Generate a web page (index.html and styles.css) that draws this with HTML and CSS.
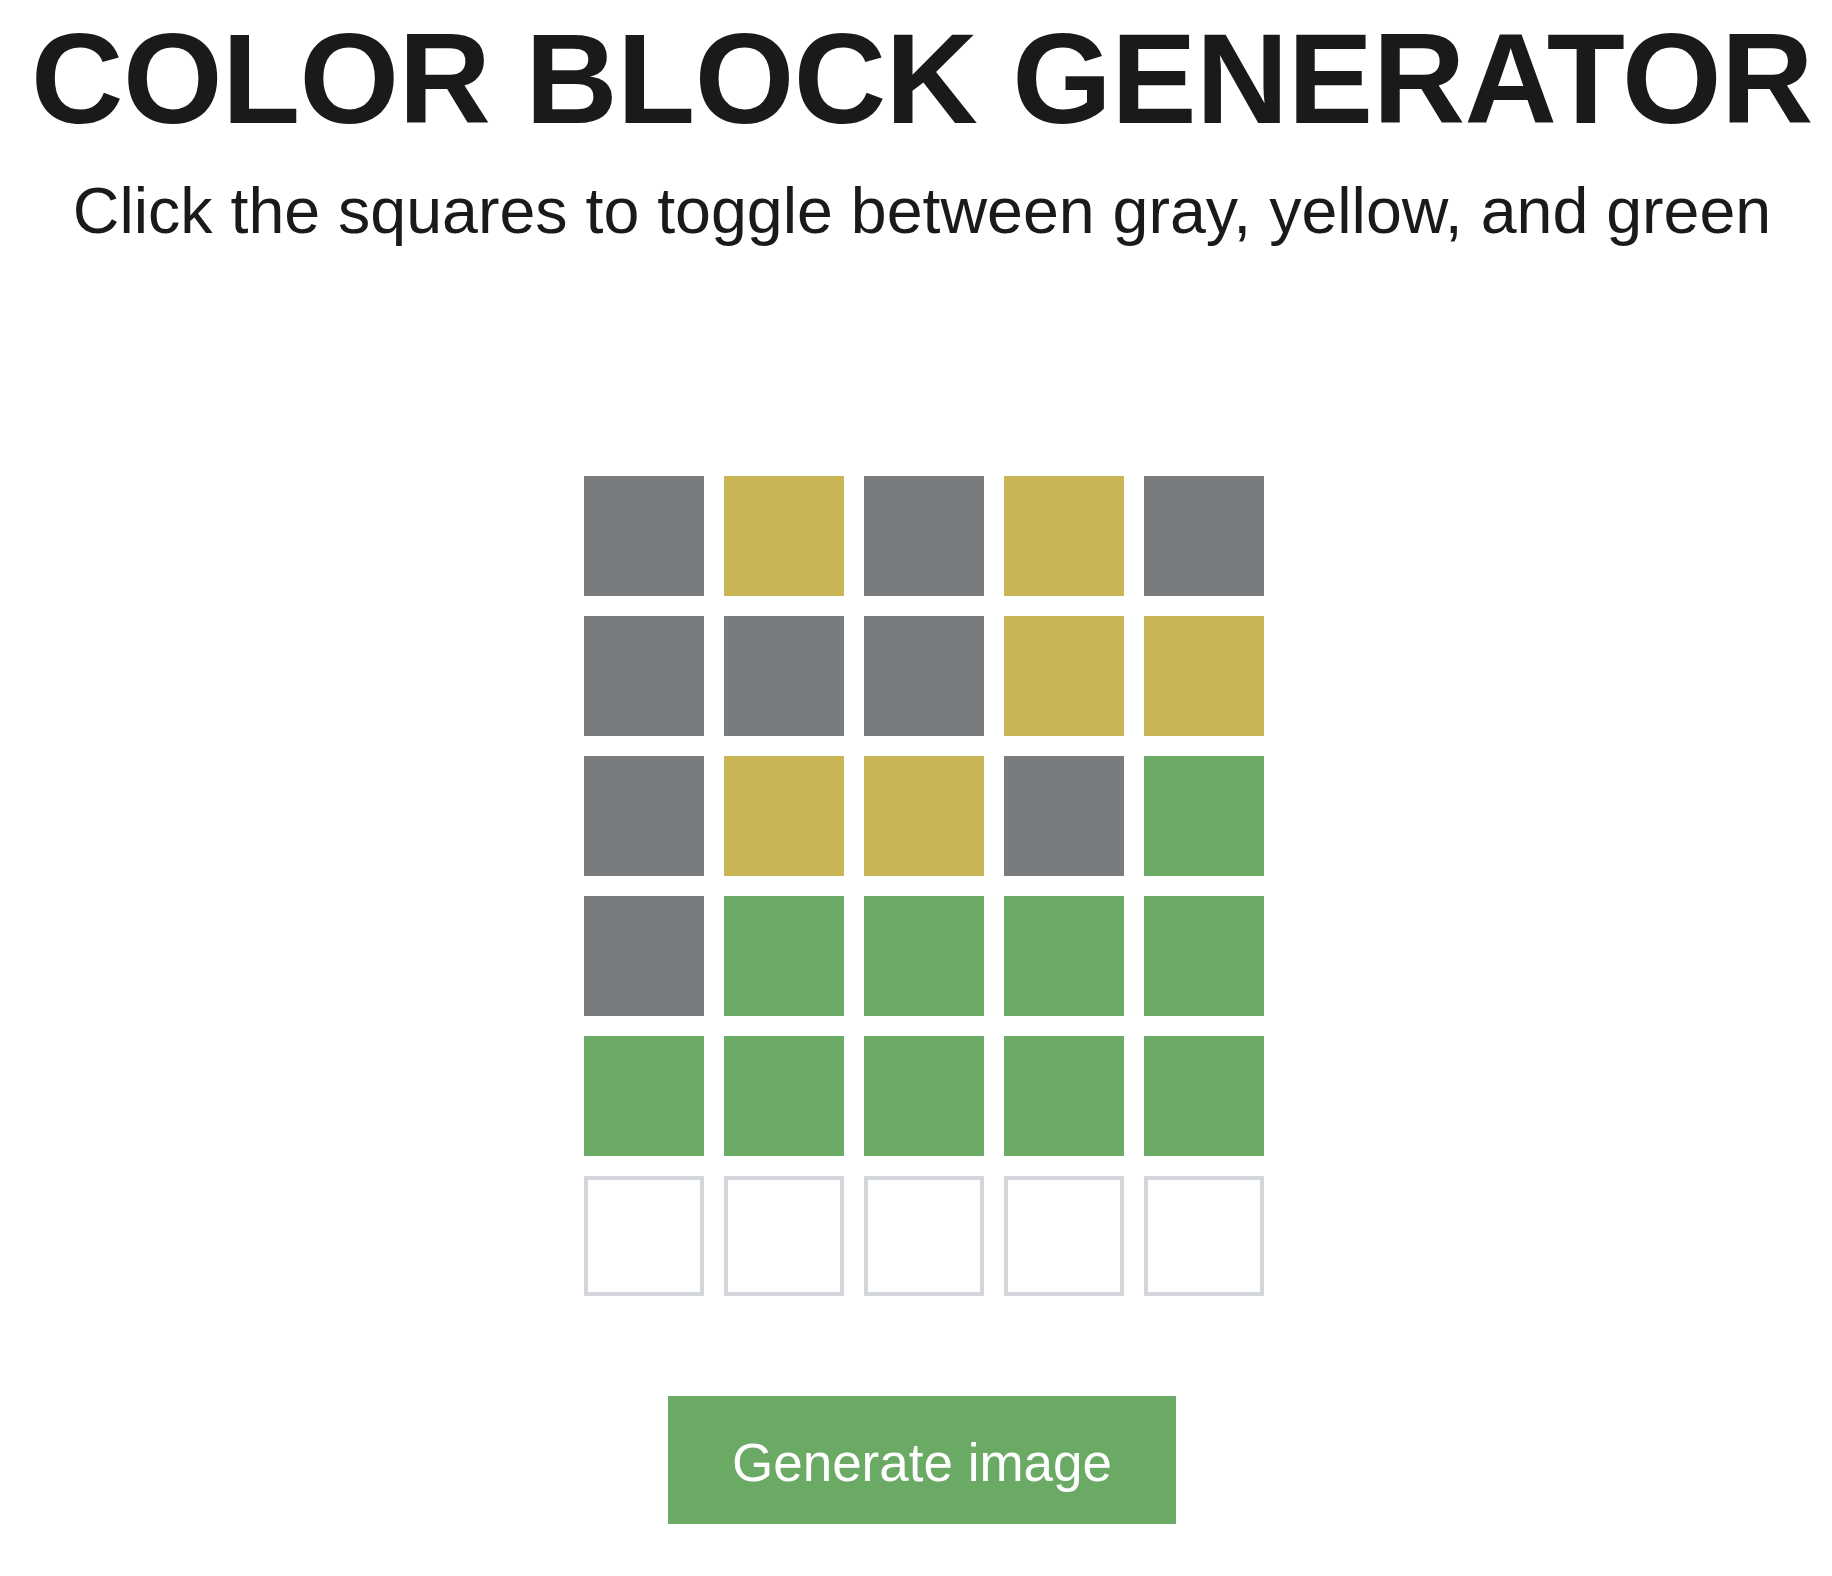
FILE: index.html
```html
<!DOCTYPE html>
<html lang="en">
<head>
<meta charset="utf-8">
<title>Color Block Generator</title>
<link rel="stylesheet" href="styles.css">
</head>
<body>
<main class="page">
  <h1 class="title">COLOR BLOCK GENERATOR</h1>
  <p class="subtitle">Click the squares to toggle between gray, yellow, and green</p>
  <div class="board">
    <div class="tile gray"></div><div class="tile yellow"></div><div class="tile gray"></div><div class="tile yellow"></div><div class="tile gray"></div>
    <div class="tile gray"></div><div class="tile gray"></div><div class="tile gray"></div><div class="tile yellow"></div><div class="tile yellow"></div>
    <div class="tile gray"></div><div class="tile yellow"></div><div class="tile yellow"></div><div class="tile gray"></div><div class="tile green"></div>
    <div class="tile gray"></div><div class="tile green"></div><div class="tile green"></div><div class="tile green"></div><div class="tile green"></div>
    <div class="tile green"></div><div class="tile green"></div><div class="tile green"></div><div class="tile green"></div><div class="tile green"></div>
    <div class="tile empty"></div><div class="tile empty"></div><div class="tile empty"></div><div class="tile empty"></div><div class="tile empty"></div>
  </div>
  <button class="generate" type="button">Generate image</button>
</main>
</body>
</html>
```

FILE: styles.css
```css
html, body {
  margin: 0;
  padding: 0;
  background: #ffffff;
}

body {
  font-family: "Liberation Sans", Arial, Helvetica, sans-serif;
  color: #1a1a1b;
}

.page {
  display: flex;
  flex-direction: column;
  align-items: center;
  padding-left: 12px;
}

.title {
  margin: 15px 0 0;
  font-size: 128px;
  line-height: 128px;
  font-weight: 700;
  letter-spacing: -0.6px;
  white-space: nowrap;
}

.subtitle {
  margin: 36px 0 0;
  font-size: 64.5px;
  line-height: 64px;
  font-weight: 400;
  white-space: nowrap;
}

.board {
  margin-top: 233px;
  margin-left: 4px;
  display: grid;
  grid-template-columns: repeat(5, 120px);
  grid-auto-rows: 120px;
  gap: 20px;
}

.tile {
  box-sizing: border-box;
  width: 120px;
  height: 120px;
}

.gray { background: #787c7e; }
.yellow { background: #c9b458; }
.green { background: #6aaa64; }
.empty {
  background: #ffffff;
  border: 4px solid #d3d6da;
}

.generate {
  margin-top: 100px;
  box-sizing: border-box;
  width: 508px;
  height: 128px;
  padding: 6px 0 0;
  border: none;
  border-radius: 0;
  background: #6aaa64;
  color: #ffffff;
  font-family: "Liberation Sans", Arial, Helvetica, sans-serif;
  font-size: 53px;
  line-height: 122px;
  cursor: pointer;
}
```
